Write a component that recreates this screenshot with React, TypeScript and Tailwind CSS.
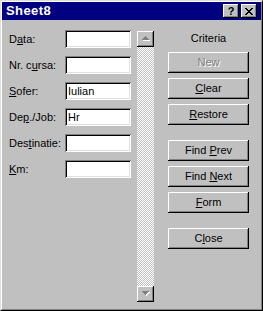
const raised =
  "shadow-[inset_-1px_-1px_#000,inset_1px_1px_#fff,inset_-2px_-2px_#808080,inset_2px_2px_#c0c0c0]";
const sunken =
  "shadow-[inset_1px_1px_#808080,inset_-1px_-1px_#fff,inset_2px_2px_#000,inset_-2px_-2px_#dfdfdf]";

type Field = { pre: string; key: string; post: string; value?: string };

const fields: Field[] = [
  { pre: "D", key: "a", post: "ta:" },
  { pre: "Nr. c", key: "u", post: "rsa:" },
  { pre: "", key: "S", post: "ofer:", value: "Iulian" },
  { pre: "De", key: "p", post: "./Job:", value: "Hr" },
  { pre: "Des", key: "t", post: "inatie:" },
  { pre: "", key: "K", post: "m:" },
];

function Btn({
  pre,
  k,
  post,
  disabled,
  className = "",
}: {
  pre: string;
  k?: string;
  post?: string;
  disabled?: boolean;
  className?: string;
}) {
  return (
    <div
      className={`flex h-[21px] w-[81px] items-center justify-center bg-[#c0c0c0] ${raised} ${className} ${
        disabled ? "text-[#808080] [text-shadow:1px_1px_0_#fff]" : "text-black"
      }`}
    >
      <span>
        {pre}
        {k && <u className="underline-offset-[1px]">{k}</u>}
        {post}
      </span>
    </div>
  );
}

function Arrow({ down }: { down?: boolean }) {
  return (
    <div className={`flex h-[16px] w-[17px] items-center justify-center bg-[#c0c0c0] ${raised}`}>
      <svg width="9" height="6" viewBox="0 0 9 6" shapeRendering="crispEdges">
        {down ? (
          <>
            <path d="M2 1h7L5.5 5z" fill="#fff" />
            <path d="M1 0h7L4.5 4z" fill="#808080" />
          </>
        ) : (
          <>
            <path d="M5.5 1L9 5H2z" fill="#fff" />
            <path d="M4.5 0L8 4H1z" fill="#808080" />
          </>
        )}
      </svg>
    </div>
  );
}

export default function App() {
  return (
    <div className="h-[311px] w-[263px] border border-t-[#dfdfdf] border-l-[#dfdfdf] border-r-black border-b-black font-['Liberation_Sans',Arial,sans-serif] text-[11px] text-black">
      <div className="flex h-full flex-col border border-t-white border-l-white border-r-[#808080] border-b-[#808080] bg-[#c0c0c0]">
        {/* caption */}
        <div className="flex h-[18px] items-center justify-between bg-[#000080] pl-[4px] pr-[4px]">
          <span className="text-[13px] font-bold tracking-[0.4px] text-white">Sheet8</span>
          <div className="flex gap-[2px]">
            <div className={`flex h-[14px] w-[16px] items-center justify-center bg-[#c0c0c0] text-[11px] font-bold leading-none ${raised}`}>
              ?
            </div>
            <div className={`flex h-[14px] w-[16px] items-center justify-center bg-[#c0c0c0] ${raised}`}>
              <svg width="8" height="7" viewBox="0 0 8 7" shapeRendering="crispEdges">
                <path d="M0 0h2v1h1v1h2V1h1V0h2v1H7v1H6v1H5v1h1v1h1v1h1v1H6V6H5V5H3v1H2v1H0V6h1V5h1V4h1V3H2V2H1V1H0z" fill="#000" />
              </svg>
            </div>
          </div>
        </div>

        {/* body */}
        <div className="flex flex-1">
          <div className="flex flex-col gap-[8px] pl-[7px] pt-[10px]">
            {fields.map((f) => (
              <div key={f.post} className="flex h-[18px] items-center">
                <span className="w-[56px]">
                  {f.pre}
                  <u className="underline-offset-[1px]">{f.key}</u>
                  {f.post}
                </span>
                <div className={`flex h-[18px] w-[66px] items-center bg-white pl-[3px] ${sunken}`}>
                  {f.value}
                </div>
              </div>
            ))}
          </div>

          <div className="mb-[7px] ml-[6px] mt-[11px] flex w-[17px] flex-col bg-[repeating-conic-gradient(#c0c0c0_0_25%,#fff_0_50%)] bg-[length:2px_2px]">
            <Arrow />
            <div className="flex-1" />
            <Arrow down />
          </div>

          <div className="ml-[14px] flex w-[81px] flex-col pt-[10px]">
            <div className="h-[22px] pt-[1px] text-center leading-[14px]">Criteria</div>
            <Btn pre="New" disabled />
            <Btn pre="" k="C" post="lear" className="mt-[5px]" />
            <Btn pre="" k="R" post="estore" className="mt-[5px]" />
            <Btn pre="Find " k="P" post="rev" className="mt-[15px]" />
            <Btn pre="Find " k="N" post="ext" className="mt-[5px]" />
            <Btn pre="" k="F" post="orm" className="mt-[5px]" />
            <Btn pre="C" k="l" post="ose" className="mt-[15px]" />
          </div>
        </div>
      </div>
    </div>
  );
}
